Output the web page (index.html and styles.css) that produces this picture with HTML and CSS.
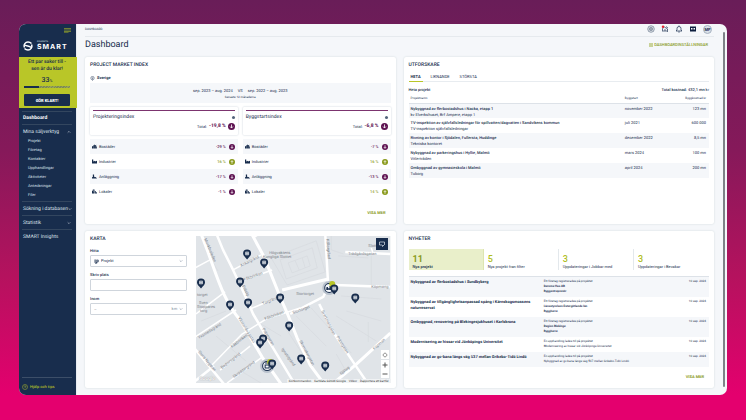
FILE: index.html
```html
<!DOCTYPE html>
<html lang="sv">
<head>
<meta charset="utf-8">
<title>Dashboard</title>
<link rel="stylesheet" href="styles.css">
</head>
<body>
<svg class="defs" aria-hidden="true">
  <symbol id="down" viewBox="0 0 12 12"><circle cx="6" cy="6" r="6" fill="#5d1150"/><path d="M6 2.500v6M3.500 6L6 8.700 8.500 6" fill="none" stroke="#fff" stroke-width="1.400"/></symbol>
  <symbol id="up" viewBox="0 0 12 12"><circle cx="6" cy="6" r="6" fill="#8a9a1c"/><path d="M6 9.500v-6M3.500 6L6 3.300 8.500 6" fill="none" stroke="#fff" stroke-width="1.400"/></symbol>
  <symbol id="homes" viewBox="0 0 12 12"><path d="M0 11V6l3-2v7zM3.500 11V3L7 1v10zM7.500 11V3L10 2v9zM10.500 11V6H12v5z" fill="#182d4d"/></symbol>
  <symbol id="factory" viewBox="0 0 12 12"><path d="M0 11V1h3v5l4-2v2l5-2v7z" fill="#182d4d"/></symbol>
  <symbol id="plant" viewBox="0 0 12 12"><path d="M0 11V8l2-1V1h3v5l2 2 2-1 3 4z" fill="#182d4d"/></symbol>
  <symbol id="office" viewBox="0 0 12 12"><path d="M0 11V4h2V1h4v10zM7 11V5h2v3h3v3z" fill="#182d4d"/><path d="M3 3h2M3 5h2M3 7h2M8 9.500h3" stroke="#fff" stroke-width=".8"/></symbol>
  <symbol id="chev" viewBox="0 0 12 12"><path d="M2 4l4 4 4-4" fill="none" stroke="currentColor" stroke-width="1.500"/></symbol>
  <symbol id="pin" viewBox="0 0 10 12"><path d="M5 0.500a4 4 0 0 1 4 4c0 2-1.500 3-4 6C2.500 7.500 1 6.500 1 4.500a4 4 0 0 1 4-4z" fill="#182d4d"/><path d="M3.500 6V3h3v3zM3.500 4.500h3" fill="#8795a8" stroke="#fff" stroke-width=".5"/></symbol>
</svg>
<div class="app">
  <aside class="side">
    <div class="brand">
      <button class="burger" aria-label="Meny"><svg viewBox="0 0 14 10"><path d="M0 1h14M0 4h14M0 7h14M0 9.500h9" stroke="#8e9e2c" stroke-width="1.500"/></svg></button>
      <div class="logo">
        <svg viewBox="0 0 20 20"><g fill="none" stroke="#fff" stroke-width="3"><path d="M3 13C.5 7 5 2 10 2c3 0 5 1 7 3"/><path d="M17 7c2.500 6-2 11-7 11-3 0-5-1-7-3"/><path d="M4 8c3 3 9 1 12 5"/></g></svg>
        <div><small>BYGGFAKTA</small><b>SMART</b></div>
      </div>
    </div>
    <section class="promo">
      <p>Ett par saker till -<br>sen är du klar!</p>
      <strong>33<small>%</small></strong>
      <div class="progress"><span style="width:33%"></span></div>
      <button>GÖR KLART!</button>
    </section>
    <nav>
      <a class="active" href="#">Dashboard</a>
      <div class="group">
        <a href="#">Mina säljverktyg <svg class="flip"><use href="#chev"/></svg></a>
        <ul><li><a href="#">Projekt</a></li><li><a href="#">Företag</a></li><li><a href="#">Kontakter</a></li><li><a href="#">Upphandlingar</a></li><li><a href="#">Aktiviteter</a></li><li><a href="#">Anteckningar</a></li><li><a href="#">Filer</a></li></ul>
      </div>
      <a href="#">Sökning i databasen <svg><use href="#chev"/></svg></a>
      <a href="#">Statistik <svg><use href="#chev"/></svg></a>
      <a href="#">SMART Insights</a>
    </nav>
    <a class="help" href="#"><svg viewBox="0 0 12 12"><circle cx="6" cy="6" r="5" fill="none" stroke="currentColor"/><path d="M4.500 5a1.500 1.500 0 1 1 1.500 1.500V8" fill="none" stroke="currentColor"/></svg>Hjälp och tips</a>
  </aside>
  <main>
    <header class="top">
      <span>DASHBOARD</span>
      <div class="tools">
        <button aria-label="Hjälp"><svg viewBox="0 0 16 16" fill="none" stroke="#4a5a72" stroke-width="1.200"><circle cx="8" cy="8" r="6.500"/><circle cx="8" cy="8" r="3.500"/><path d="M8 6v4M6 8h4"/></svg></button>
        <button aria-label="Bevakningar"><svg viewBox="0 0 16 16" fill="none" stroke="#304360" stroke-width="1.500"><path d="M3 13V7l4-3 6 4v6M6 14v-4h4v4M10 3l4 3"/><circle cx="4" cy="3.500" r="2.500" fill="#e5242e" stroke="none"/></svg></button>
        <button aria-label="Aviseringar"><svg viewBox="0 0 16 16" fill="none" stroke="#182d4d" stroke-width="1.400"><path d="M2 12h12l-2-2V7a4 4 0 0 0-8 0v3zM6.500 14h3M8 1v2"/></svg></button>
        <button aria-label="Video"><svg viewBox="0 0 16 16"><path d="M2 3h12v10H2z" fill="#0d1e3e"/><path d="M4 6h3v3H4zM9 6h3v3H9z" fill="#fff"/></svg></button>
        <button class="avatar">MP</button>
      </div>
    </header>
    <div class="heading">
      <h1>Dashboard</h1>
      <button class="link"><svg viewBox="0 0 12 12"><path d="M1 1h4v4H1zM7 1h4v4H7zM1 7h4v4H1zM7 7h4v4H7z" fill="#9cac3a"/></svg>DASHBOARDINSTÄLLNINGAR</button>
    </div>
    <div class="cards">
      <section class="card">
        <h2>PROJECT MARKET INDEX</h2>
        <p class="place"><svg viewBox="0 0 12 12"><circle cx="6" cy="5" r="4" fill="none" stroke="#304360" stroke-width="1.300"/><circle cx="6" cy="5" r="1.300" fill="#304360"/><path d="M5 9l1 3 1-3" fill="#304360"/></svg>Sverige</p>
        <div class="period"><p><span>sep. 2023 – aug. 2024</span><span>VS</span><span>sep. 2022 – aug. 2023</span></p><small>Senaste 12 månaderna</small></div>
        <div class="indexes">
          <div>
            <div class="index"><h3>Projekteringsindex <i></i></h3><p>Total: <b>-19,8 %</b><svg><use href="#down"/></svg></p></div>
            <ul class="rates">
              <li><svg><use href="#homes"/></svg>Bostäder<b>-29 %</b><svg><use href="#down"/></svg></li>
              <li><svg><use href="#factory"/></svg>Industrier<b class="pos">16 %</b><svg><use href="#up"/></svg></li>
              <li><svg><use href="#plant"/></svg>Anläggning<b>-17 %</b><svg><use href="#down"/></svg></li>
              <li><svg><use href="#office"/></svg>Lokaler<b>-1 %</b><svg><use href="#down"/></svg></li>
            </ul>
          </div>
          <div>
            <div class="index"><h3>Byggstartsindex <i></i></h3><p>Total: <b>-6,8 %</b><svg><use href="#down"/></svg></p></div>
            <ul class="rates">
              <li><svg><use href="#homes"/></svg>Bostäder<b>-7 %</b><svg><use href="#down"/></svg></li>
              <li><svg><use href="#factory"/></svg>Industrier<b class="pos">16 %</b><svg><use href="#up"/></svg></li>
              <li><svg><use href="#plant"/></svg>Anläggning<b>-13 %</b><svg><use href="#down"/></svg></li>
              <li><svg><use href="#office"/></svg>Lokaler<b class="pos">14 %</b><svg><use href="#up"/></svg></li>
            </ul>
          </div>
        </div>
        <a class="more" href="#">VISA MER</a>
      </section>

      <section class="card">
        <h2>UTFORSKARE</h2>
        <div class="tabs"><button class="on">HETA</button><button>LIKNANDE</button><button>STÖRSTA</button></div>
        <div class="summary"><h3>Heta projekt</h3><b>Total kostnad: 432,1 mn <span>kr</span></b></div>
        <table class="hot">
          <thead><tr><th>Projektnamn</th><th>Byggstart</th><th>Byggkostnad kr</th></tr></thead>
          <tbody>
            <tr><td><b>Nybyggnad av flerbostadshus i Nacka, etapp 1</b>kv Elverkshuset, Brf Ampere, etapp 1</td><td>november 2022</td><td>123 mn</td></tr>
            <tr><td><b>TV-inspektion av självfallsledningar för spillvatten/dagvatten i Sandvikens kommun</b>TV-inspektion självfallsledningar</td><td>juli 2021</td><td>600 000</td></tr>
            <tr><td><b>Rivning av kontor i Sjödalen, Fullersta, Huddinge</b>Tekniska kontoret</td><td>december 2022</td><td>8,5 mn</td></tr>
            <tr><td><b>Nybyggnad av parkeringshus i Hyllie, Malmö</b>Vitlertråden</td><td>mars 2024</td><td>100 mn</td></tr>
            <tr><td><b>Ombyggnad av gymnasieskola i Malmö</b>Tuborg</td><td>april 2024</td><td>200 mn</td></tr>
          </tbody>
        </table>
      </section>

      <section class="card mapcard">
        <form>
          <h2>KARTA</h2>
          <label for="find">Hitta</label>
          <div class="field"><svg viewBox="0 0 14 12"><path d="M1 2h6M1 5h5M1 8h6v3H3M8 2h4v5H8zM8 7v4" fill="none" stroke="#182d4d" stroke-width="2"/></svg><select id="find"><option>Projekt</option></select><svg class="end"><use href="#chev"/></svg></div>
          <label for="spot">Skriv plats</label>
          <div class="field"><input id="spot" type="text"></div>
          <label for="within">Inom</label>
          <div class="field"><input id="within" type="text" placeholder="–"><span>km</span><svg class="end"><use href="#chev"/></svg></div>
        </form>
        <div class="map">
          <svg class="streets" viewBox="0 0 194 147" preserveAspectRatio="xMidYMid slice">
            <rect width="194" height="147" fill="#e0e4e8"/>
            <g fill="none" stroke="#d5d9de" stroke-width=".6"><path d="M75 22l45-17 9 31-38 13zM84 24l32-12 5 20-31 11zM92 27l19-7 3 10-18 7zM99 25l4 9M106 22l3 10M175 20v30M142 20l30 2M145 60l40 3M140 80l40 25M100 80l30 30M115 72l40 45M20 100l30 25M5 85l25-10M10 15l12 20M135 0v14l12 4M60 85l25 15M150 75l35 10M172 86v20M140 118l8 14M45 135l20 12M88 90l25 38"/></g>
            <g fill="none" stroke="#fff" stroke-linejoin="round">
              <path stroke-width="3" d="M5-2C20 35 25 62 44 84L66 121 85 148M55-3L68 21 84 61 91 77 101 102 114 129 128 148M86 54l46-11M194 97L159 129 136 148"/>
              <path stroke-width="2.500" d="M20-3L27 14 37 34 52 66 57 78 77 112 98 147M129-2L132 50 127 61 94 78M139 49l55 2M149 16l45 2M123 68L137 96 159 129 172 148M-1 113L28 148M-1 145L18 130"/>
              <path stroke-width="1.500" d="M37 34L65 19M46 45L76 34M54 73L83 61M-1 32L14 24M0 78L29 56M104 72L70 83 46 98 16 129M-1 101L40 74M24 134L54 110M31 147L66 121M175 12l2 6M57 2l10-6"/>
            </g>
            <g class="names">
              <text transform="translate(8 3) rotate(67)">Munkbroleden</text><text transform="translate(130 3) rotate(85)">Källargränd</text><text x="73" y="18">Högvaktens</text><text x="67" y="22">Kungliga Slottet</text><text x="100" y="59">Stortorget</text><text x="172" y="11">Slotts</text><text x="152" y="19">Trädgårdsgatan</text><text x="175" y="52">Köpmang.</text>
              <text transform="translate(45 31) rotate(-27)">Ankargränd</text><text transform="translate(48 45) rotate(-20)">Kåkbrinken</text><text transform="translate(67 69) rotate(-23)">Torgränd</text><text transform="translate(97 78) rotate(-20)">Stortorget</text><text x="1" y="60">torget</text><text x="3" y="68">Sven</text><text x="1" y="72">Stoppares</text><text x="4" y="76">torg</text>
              <text transform="translate(125 75) rotate(63)">Svartmangatan</text><text transform="translate(140 101) rotate(58)">Prästgatan</text><text transform="translate(103 105) rotate(62)">Skomakargatan</text><text transform="translate(42 82) rotate(59)">Västerlånggatan</text><text transform="translate(66 93) rotate(59)">Prästgatan</text><text transform="translate(3 103) rotate(-32)">Yxsmedsgränd</text><text transform="translate(36 112) rotate(-38)">Kåkbrinken</text><text transform="translate(69 84) rotate(-20)">Kåkbrinken</text><text transform="translate(26 133) rotate(-38)">Bedoirsgränd</text><text transform="translate(38 142) rotate(-36)">Skräddargränd</text><text transform="translate(2 116) rotate(50)">Stora Nygatan</text><text transform="translate(178 114) rotate(-42)">Köpman</text><text transform="translate(85 113) rotate(55)">Ignatiigränd</text><text transform="translate(145 139) rotate(-40)">Själag.</text><text transform="translate(46 50) rotate(63)">Prästg.</text>
            </g>
            <g><circle cx="133" cy="52" r="7" fill="#b8c1cc"/><circle cx="133" cy="52" r="4.500" fill="#f6f8fa" stroke="#182d4d"/><path d="M130 53h5M131 51v3M134 50v4" stroke="#182d4d" stroke-width="1.500"/><circle cx="136" cy="48" r="3" fill="#b9c628"/><circle cx="71" cy="130" r="7" fill="#b8c1cc"/><circle cx="71" cy="130" r="4.500" fill="#f6f8fa" stroke="#182d4d"/><path d="M69 132v-3h4v3zM69 127h4" stroke="#182d4d" fill="none"/><circle cx="74" cy="126" r="3" fill="#b9c628"/></g>
            <g>
              <use href="#pin" width="10" height="12" x="46" y="13"/><use href="#pin" width="10" height="12" x="63" y="22"/><use href="#pin" width="10" height="12" x="39" y="41"/><use href="#pin" width="10" height="12" x="0" y="42"/><use href="#pin" width="10" height="12" x="29" y="64"/><use href="#pin" width="10" height="12" x="47" y="62"/><use href="#pin" width="10" height="12" x="79" y="57"/><use href="#pin" width="10" height="12" x="133" y="48"/><use href="#pin" width="10" height="12" x="154" y="57"/><use href="#pin" width="10" height="12" x="88" y="85"/><use href="#pin" width="10" height="12" x="62" y="98"/><use href="#pin" width="10" height="12" x="59" y="102"/><use href="#pin" width="10" height="12" x="100" y="118"/><use href="#pin" width="10" height="12" x="124" y="125"/><use href="#pin" width="10" height="12" x="71" y="123"/>
            </g>
          </svg>
          <button class="draw" aria-label="Rita område"><svg viewBox="0 0 16 16" fill="none" stroke="#dfe5ec" stroke-width="1.400"><path d="M3 10V4h10v4M3 10h5M9 13l5-5M9 13v-3"/></svg></button>
          <div class="zoomer"><button aria-label="Centrera"><svg viewBox="0 0 12 12" fill="none" stroke="#666"><circle cx="6" cy="6" r="3.500"/><path d="M6 1v2M6 9v2M1 6h2M9 6h2"/></svg></button><button aria-label="Zooma in"><svg viewBox="0 0 12 12" stroke="#555" stroke-width="2"><path d="M6 1v10M1 6h10"/></svg></button><button aria-label="Zooma ut"><svg viewBox="0 0 12 12" stroke="#555" stroke-width="2"><path d="M1 6h10"/></svg></button></div>
          <span class="google">Google</span>
          <div class="legal"><span>Kortkommandon</span><span>Kartdata ©2024 Google</span><span>Villkor</span><span>Rapportera ett kartfel</span></div>
        </div>
      </section>

      <section class="card">
        <h2>NYHETER</h2>
        <div class="stats">
          <button class="on"><b>11</b>Nya projekt</button><button><b>5</b>Nya projekt från filter</button><button><b>3</b>Uppdateringar i Jobbar med</button><button><b>3</b>Uppdateringar i Bevakar</button>
        </div>
        <table class="news">
          <tbody>
            <tr><td>Nybyggnad av flerbostadshus i Sundbyberg</td><td>Ett företag registrerades på projektet<b>Derome Hus AB</b><b>Byggentreprenör</b></td><td>10 sep. 2024</td></tr>
            <tr><td>Nybyggnad av tillgänglighetsanpassad spång i Kärnskogsmossens naturreservat</td><td>Ett företag registrerades på projektet<b>Länsstyrelsen Östergötlands län</b><b>Byggherre</b></td><td>10 sep. 2024</td></tr>
            <tr><td>Ombyggnad, renovering på Blekingesjukhuset i Karlskrona</td><td>Ett företag registrerades på projektet<b>Region Blekinge</b><b>Byggherre</b></td><td>10 sep. 2024</td></tr>
            <tr><td>Modernisering av hissar vid Jönköpings Universitet</td><td>En upphandling lades till på projektet<br>Modernisering av hissar vid Jönköpings Universitet</td><td>10 sep. 2024</td></tr>
            <tr><td>Nybyggnad av gc-bana längs väg 537 mellan Grikebo-Tidö Lindö</td><td>En upphandling lades till på projektet<br>Nybyggnad av gc-bana längs väg 537 mellan Grikebo-Tidö Lindö</td><td>10 sep. 2024</td></tr>
          </tbody>
        </table>
        <a class="more" href="#">VISA MER</a>
      </section>
    </div>
    <div class="scroll" aria-hidden="true"></div>
  </main>
</div>
</body>
</html>
```
FILE: styles.css
```css
* { box-sizing: border-box; margin: 0; padding: 0; }
body {
  min-height: 100vh;
  padding: 24px 19px 25px;
  display: flex;
  font: 4px/6px Roboto, "Liberation Sans", sans-serif;
  text-rendering: geometricPrecision;
  color: #182d4d;
  background: linear-gradient(#691d58 0, #86195a 36%, #b5125e 66%, #e4006e 94%);
}
button, input, select { font: inherit; color: inherit; background: none; border: 0; }
a { color: inherit; text-decoration: none; }
ul { list-style: none; }
svg { display: block; width: 6px; height: 6px; flex: none; }
.defs { position: absolute; width: 0; height: 0; }

.app {
  flex: 1;
  display: flex;
  overflow: hidden;
  border-radius: 7px;
  background: #f5f7fa;
}

.side { flex: none; width: 58px; display: flex; flex-direction: column; background: #182d4d; color: #dbe1ea; border-right: 1px solid #e8ecf1; }
.brand { height: 33px; padding: 4px 5px 0 4px; }
.burger { display: block; margin-left: auto; }
.burger svg { width: 7px; height: 5px; }
.logo { display: flex; align-items: flex-end; gap: 4px; margin-top: 8px; }
.logo > svg { width: 10px; height: 10px; }
.logo div { display: flex; flex-direction: column; }
.logo small { font-size: 2px; line-height: 2px; }
.logo b { font: 700 7px/8px Inter, Roboto, sans-serif; letter-spacing: 1px; color: #fff; }
.promo { height: 51px; margin-right: -1px; padding: 2px 7px 4px 5px; background: #b9c628; color: #182d4d; text-align: center; font-weight: 500; font-size: 5px; line-height: 7px; display: flex; flex-direction: column; position: relative; }
.promo p { white-space: nowrap; }
.promo strong { font-size: 7px; line-height: 8px; margin-top: 3px; font-weight: 500; }
.promo strong small { font-size: 4px; }
.progress { height: 2px; margin-top: 1px; background: repeating-linear-gradient(135deg, #7c8a57 0 1px, #98a455 1px 2px); }
.progress span { display: block; height: 2px; background: #182d4d; }
.promo button { margin-top: 6px; height: 12px; flex: none; background: #182d4d; color: #fff; font-size: 4px; font-weight: 900; border-radius: 1px; }
nav { margin: 3px 4px 0 3px; flex: 1; }
nav > a, .group { border-top: 1px solid #33465f; }
nav > a, .group > a { display: flex; align-items: center; justify-content: space-between; height: 14px; padding: 0 1px; font-size: 5px; white-space: nowrap; }
nav svg { width: 4px; height: 4px; }
.flip { transform: rotate(180deg); }
nav .active { color: #fff; font-weight: 700; height: 13px; }
.group { padding-bottom: 2px; }
.group ul { padding-left: 6px; }
.group li { line-height: 9px; }
.group > a { height: 9px; margin-top: 2px; }
.help { display: flex; align-items: center; gap: 2px; margin: 0 4px 0 3px; height: 18px; border-top: 1px solid #3c4e68; color: #b0be2b; font-weight: 500; }

main { flex: 1; min-width: 0; display: flex; flex-direction: column; padding: 0 13px 7px 8px; position: relative; }
.top { display: flex; justify-content: space-between; align-items: center; height: 13px; padding: 0 2px 2px 0; border-bottom: 1px solid #e6eaee; font-size: 3px; }
.tools { display: flex; align-items: center; gap: 6px; }
.tools button, .tools svg { width: 8px; height: 8px; }
.tools .avatar { width: 9px; height: 9px; border-radius: 50%; background: #d9e0e8; border: 1px solid #a7b2c0; font-size: 4px; font-weight: 700; line-height: 7px; }
.heading { display: flex; justify-content: space-between; align-items: center; height: 15px; margin-bottom: 5px; padding-right: 6px; }
h1 { font-size: 9px; line-height: 12px; font-weight: 400; }
.link { display: flex; align-items: center; gap: 1px; color: #8a9a1c; font-weight: 500; }
.link svg { width: 4px; height: 4px; }

.cards { flex: 1; display: grid; grid-template-columns: 1fr 1fr; grid-template-rows: 167fr 157fr; gap: 7px 8px; }
.card { min-width: 0; display: flex; flex-direction: column; padding: 5px; background: #fff; border-radius: 2px; box-shadow: 0 0 2px #ccd6d8; }
h2 { font-size: 5px; line-height: 6px; font-weight: 500; }
.place { display: flex; align-items: center; gap: 2px; font-weight: 700; margin-top: 7px; }
.place svg { width: 5px; height: 5px; }
.period { margin-top: 2px; height: 20px; padding-top: 4px; text-align: center; background: #f5f7fa; }
.period p { display: flex; justify-content: center; gap: 5px; line-height: 7px; }
.period small { display: block; font-size: 3px; line-height: 6px; }
.indexes { display: grid; grid-template-columns: 1fr 1fr; gap: 5px; margin-top: 4px; }
.index { height: 28px; padding: 3px; border-radius: 1px; box-shadow: 0 0 2px #c2cbd5; }
.index h3 { display: flex; justify-content: space-between; align-items: center; padding-top: 3px; border-top: 1px solid #7c346f; font-size: 5px; line-height: 7px; font-weight: 400; }
.index i { width: 3px; height: 3px; border-radius: 50%; background: #52637b; }
.index p { display: flex; justify-content: flex-end; align-items: center; gap: 2px; margin-top: 2px; line-height: 7px; }
.index p svg { width: 7px; height: 7px; }
.index b { font-size: 5px; color: #5d1150; }
.rates { margin-top: 4px; }
.rates li { display: flex; align-items: center; gap: 2px; height: 15px; padding: 0 3px 0 2px; }
.rates li:nth-child(odd) { background: #f5f7fa; }
.rates b { margin-left: auto; margin-right: 1px; color: #5d1150; font-weight: 500; }
.rates svg:first-child { width: 5px; height: 5px; }
.rates .pos { color: #8a9a1c; }
.more { margin: auto 5px 3px auto; color: #8a9a1c; font-weight: 700; }

.tabs { display: flex; gap: 6px; margin-top: 6px; border-bottom: 1px solid #e8ecf0; }
.tabs button { height: 8px; padding: 0 2px 1px; font-weight: 400; border-bottom: 1px solid transparent; margin-bottom: -1px; }
.tabs .on { font-weight: 700; border-color: #b9c628; }
.summary { display: flex; justify-content: space-between; align-items: center; margin-top: 4px; height: 7px; }
.summary h3 { font-size: 4px; font-weight: 500; }
.summary b { font-weight: 500; }
.summary span { font-weight: 400; }
table { width: 100%; border-collapse: collapse; table-layout: fixed; }
th { font-size: 3px; font-weight: 400; text-align: left; }
td, th { vertical-align: top; }
tbody tr:nth-child(odd) { background: #f5f7fa; }
.hot { margin-top: 2px; }
.hot th { height: 8px; border-bottom: 1px solid #dde2e8; }
.hot th:first-child { width: 72%; }
.hot td { height: 15px; padding-top: 2px; }
.hot b { display: block; font-weight: 500; }

.mapcard { display: grid; grid-template-columns: 1fr 2fr; gap: 9px; }
form { min-width: 0; }
form h2 { margin-bottom: 6px; }
label { display: block; height: 7px; font-weight: 500; }
.field { display: flex; align-items: center; gap: 2px; height: 12px; margin-bottom: 5px; padding: 0 3px; border: 1px solid #cfd5dc; border-radius: 1px; background: #fff; }
.field select, .field input { flex: 1; min-width: 0; width: 100%; height: 8px; appearance: none; outline: 0; }
.field span { color: #8390a0; }
.field svg { width: 5px; height: 5px; }
.field .end { width: 4px; height: 4px; color: #718096; }
.map { position: relative; min-width: 0; overflow: hidden; }
.streets { position: absolute; width: 100%; height: 100%; }
.names text { font-size: 4px; fill: #7c838a; }
.draw { position: absolute; top: 2px; right: 3px; width: 12px; height: 12px; background: #182d4d; display: grid; place-items: center; }
.draw svg { width: 8px; height: 8px; }
.zoomer { position: absolute; right: 2px; bottom: 5px; display: flex; flex-direction: column; }
.zoomer button { width: 8px; height: 9px; display: grid; place-items: center; background: #fff; }
.zoomer button:first-child { margin-bottom: 1px; }
.google { position: absolute; left: 3px; bottom: 1px; font-size: 5px; font-weight: 500; color: #fff; text-shadow: 0 0 1px #777; }
.legal { position: absolute; right: 0; bottom: 0; display: flex; gap: 3px; padding: 0 2px; font-size: 3px; line-height: 4px; background: #f0f2f4; white-space: nowrap; color: #333; }

.stats { display: grid; grid-template-columns: repeat(4, 1fr); margin-top: 7px; }
.stats button { height: 21px; padding: 3px 4px 0; text-align: left; border-right: 1px solid #e3e8ec; line-height: 5px; white-space: nowrap; }
.stats button:last-child { border: 0; }
.stats b { display: block; font-size: 9px; line-height: 10px; font-weight: 500; color: #b0be1e; }
.stats .on { background: #e9efca; border-color: #dde5b0; font-weight: 500; }
.stats .on b { color: #8a9a1c; font-weight: 700; }
.news { margin-top: 6px; border-top: 1px solid #dde2e8; line-height: 5px; }
.news td { padding: 2px 0 3px; font-size: 3px; }
.news td:first-child { width: 45%; padding-right: 10px; font-size: 4px; line-height: 6px; font-weight: 700; }
.news td:last-child { width: 15%; }
.news b { display: block; font-weight: 700; }
table td:first-child, table th:first-child { padding-left: 2px; }
table td:last-child, table th:last-child { padding-right: 3px; text-align: right; }
.scroll { position: absolute; top: 8px; bottom: 8px; right: 2px; width: 2px; border-radius: 1px; background: #7e8288; }
```
